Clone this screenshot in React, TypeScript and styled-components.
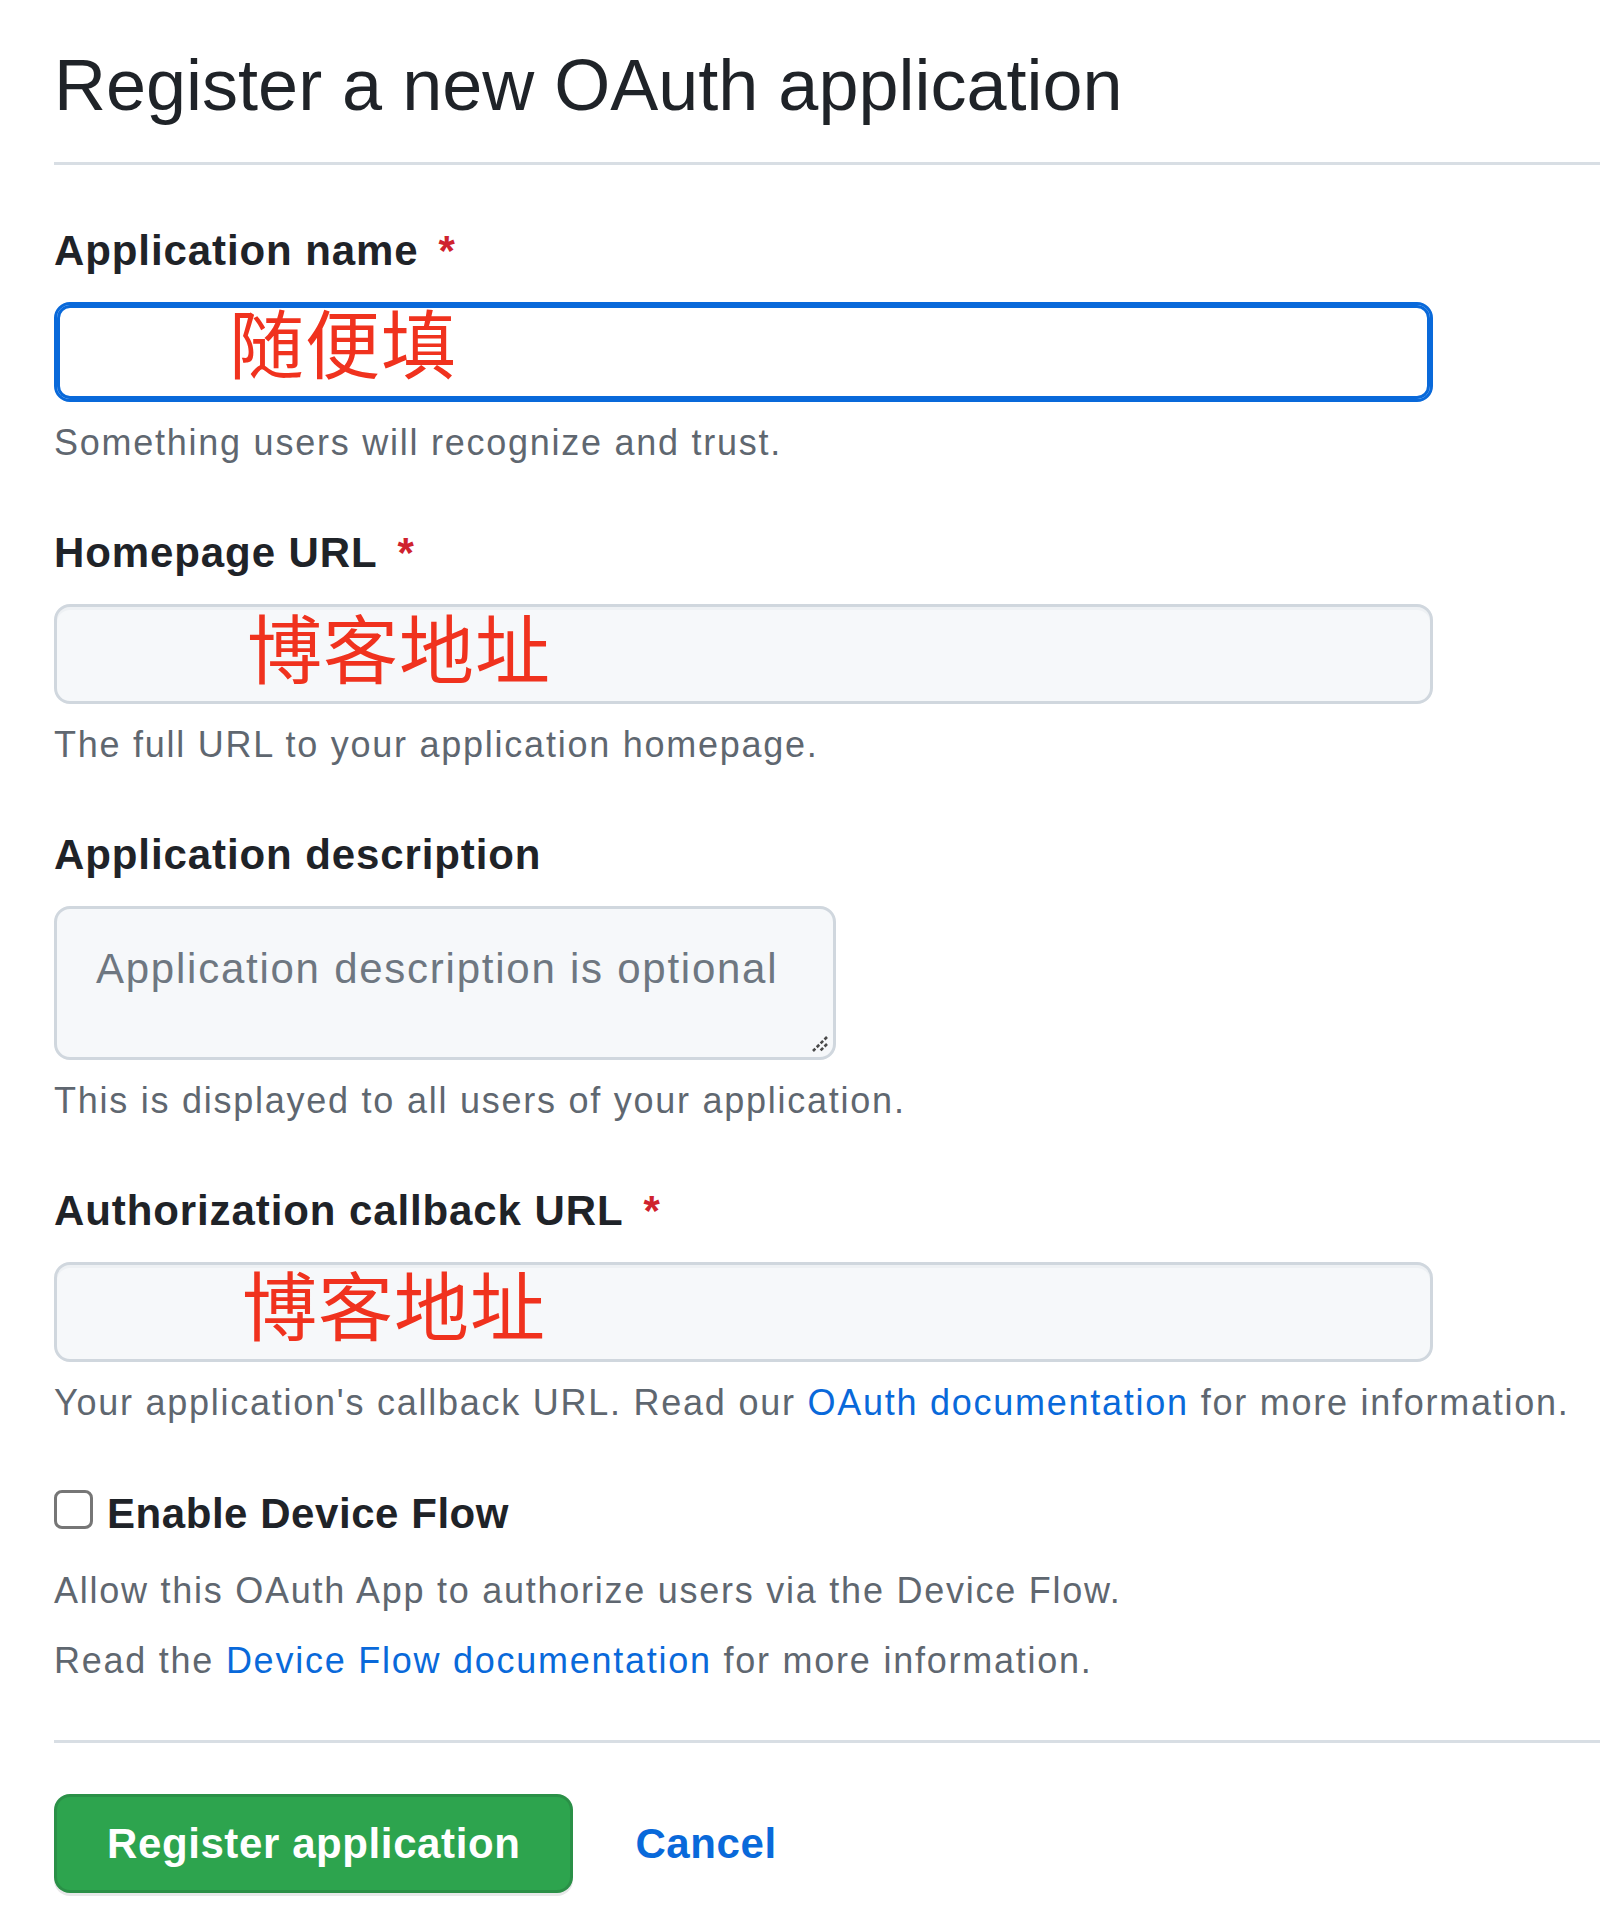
import React from "react";
import styled, { createGlobalStyle } from "styled-components";

const GlobalStyle = createGlobalStyle`
  html, body {
    margin: 0;
    padding: 0;
    background: #ffffff;
  }
  body {
    font-family: "Liberation Sans", Arial, sans-serif;
    color: #1f2328;
  }
`;

const Page = styled.main`
  padding: 40px 0 0 54px;
  min-height: 1911px;
  box-sizing: border-box;
`;

const Header = styled.header`
  padding-bottom: 32px;
  border-bottom: 3px solid #d8dee4;
`;

const Title = styled.h1`
  margin: 0;
  font-size: 72px;
  line-height: 90px;
  font-weight: 400;
  color: #1f2328;
`;

const Form = styled.form`
  display: flex;
  flex-direction: column;
`;

const Group = styled.div<{ $top?: number }>`
  margin-top: ${(p) => p.$top ?? 56}px;
  display: flex;
  flex-direction: column;
  align-items: flex-start;
`;

const Label = styled.label`
  display: block;
  font-size: 42px;
  line-height: 54px;
  font-weight: 700;
  letter-spacing: 0.9px;
  color: #1f2328;
  margin-bottom: 24px;
`;

const Required = styled.span`
  color: #cf222e;
  margin-left: 20px;
`;

const TextInput = styled.input<{ $focused?: boolean; $indent: number; $lift: number }>`
  box-sizing: border-box;
  width: 1379px;
  height: 100px;
  margin: 0;
  padding: 0 0 ${(p) => p.$lift}px ${(p) => p.$indent}px;
  border: 3px solid ${(p) => (p.$focused ? "#0969da" : "#d0d7de")};
  border-radius: 16px;
  background: ${(p) => (p.$focused ? "#ffffff" : "#f6f8fa")};
  box-shadow: ${(p) => (p.$focused ? "inset 0 0 0 3px #0969da" : "inset 0 3px 0 rgba(208,215,222,0.2)")};
  font-family: "Noto Sans CJK SC", "Noto Sans CJK JP", sans-serif;
  font-size: 75px;
  font-weight: 400;
  letter-spacing: 1px;
  color: #f0321e;
  outline: none;
`;

const AreaWrap = styled.div`
  position: relative;
  width: 782px;
  height: 154px;
`;

const TextArea = styled.textarea`
  box-sizing: border-box;
  width: 782px;
  height: 154px;
  margin: 0;
  padding: 28px 20px 0 39px;
  border: 3px solid #d0d7de;
  border-radius: 16px;
  background: #f6f8fa;
  font-family: "Liberation Sans", Arial, sans-serif;
  font-size: 42px;
  line-height: 63px;
  letter-spacing: 1.75px;
  color: #1f2328;
  resize: none;
  outline: none;
  &::placeholder {
    color: #6e7781;
    opacity: 1;
  }
`;

const Grip = styled.svg`
  position: absolute;
  right: 7px;
  bottom: 7px;
  width: 22px;
  height: 22px;
  pointer-events: none;
`;

const Note = styled.p<{ $top?: number }>`
  margin: ${(p) => p.$top ?? 14}px 0 0;
  font-size: 36px;
  line-height: 54px;
  letter-spacing: 1.75px;
  color: #5f6770;
  white-space: nowrap;
`;

const Link = styled.a`
  color: #0969da;
  text-decoration: none;
`;

const CheckRow = styled.label`
  margin-top: 57px;
  display: flex;
  align-items: flex-start;
  gap: 14px;
  font-size: 42px;
  line-height: 54px;
  font-weight: 700;
  letter-spacing: 0.55px;
  color: #1f2328;
`;

const Checkbox = styled.input`
  appearance: none;
  -webkit-appearance: none;
  box-sizing: border-box;
  width: 39px;
  height: 39px;
  margin: 3px 0 0;
  border: 3px solid #767676;
  border-radius: 8px;
  background: #ffffff;
  flex: none;
`;

const Footer = styled.div`
  margin-top: 52px;
  border-top: 3px solid #d8dee4;
  padding-top: 51px;
  display: flex;
  align-items: center;
  gap: 62px;
`;

const PrimaryButton = styled.button`
  box-sizing: border-box;
  height: 99px;
  padding: 0 50px;
  border: 3px solid rgba(27, 31, 36, 0.15);
  border-radius: 16px;
  background: #2da44e;
  box-shadow: 0 3px 0 rgba(27, 31, 36, 0.1);
  font-family: "Liberation Sans", Arial, sans-serif;
  font-size: 42px;
  font-weight: 700;
  letter-spacing: 0.6px;
  color: #ffffff;
  cursor: pointer;
`;

const CancelLink = styled.a`
  font-size: 42px;
  font-weight: 700;
  letter-spacing: 0.6px;
  color: #0969da;
  text-decoration: none;
`;

export default function App() {
  return (
    <>
      <GlobalStyle />
      <Page>
        <Header>
          <Title>Register a new OAuth application</Title>
        </Header>
        <Form onSubmit={(e) => e.preventDefault()}>
          <Group $top={59}>
            <Label htmlFor="app-name">
              Application name<Required>*</Required>
            </Label>
            <TextInput id="app-name" $focused $indent={172} $lift={24} value="随便填" readOnly />
            <Note>Something users will recognize and trust.</Note>
          </Group>

          <Group>
            <Label htmlFor="homepage">
              Homepage URL<Required>*</Required>
            </Label>
            <TextInput id="homepage" $indent={190} $lift={18} value="博客地址" readOnly />
            <Note>The full URL to your application homepage.</Note>
          </Group>

          <Group>
            <Label htmlFor="desc">Application description</Label>
            <AreaWrap>
              <TextArea id="desc" placeholder="Application description is optional" />
              <Grip viewBox="0 0 22 22">
                <path d="M20 6 L6 20 M20 13 L13 20" stroke="#4a4a4a" strokeWidth="2.6" strokeDasharray="3.5 2" fill="none" />
              </Grip>
            </AreaWrap>
            <Note>This is displayed to all users of your application.</Note>
          </Group>

          <Group>
            <Label htmlFor="callback">
              Authorization callback URL<Required>*</Required>
            </Label>
            <TextInput id="callback" $indent={185} $lift={20} value="博客地址" readOnly />
            <Note>
              Your application's callback URL. Read our <Link href="#">OAuth documentation</Link> for more information.
            </Note>
          </Group>

          <CheckRow>
            <Checkbox type="checkbox" />
            Enable Device Flow
          </CheckRow>
          <Note $top={23}>Allow this OAuth App to authorize users via the Device Flow.</Note>
          <Note $top={16}>
            Read the <Link href="#">Device Flow documentation</Link> for more information.
          </Note>

          <Footer>
            <PrimaryButton type="submit">Register application</PrimaryButton>
            <CancelLink href="#">Cancel</CancelLink>
          </Footer>
        </Form>
      </Page>
    </>
  );
}
